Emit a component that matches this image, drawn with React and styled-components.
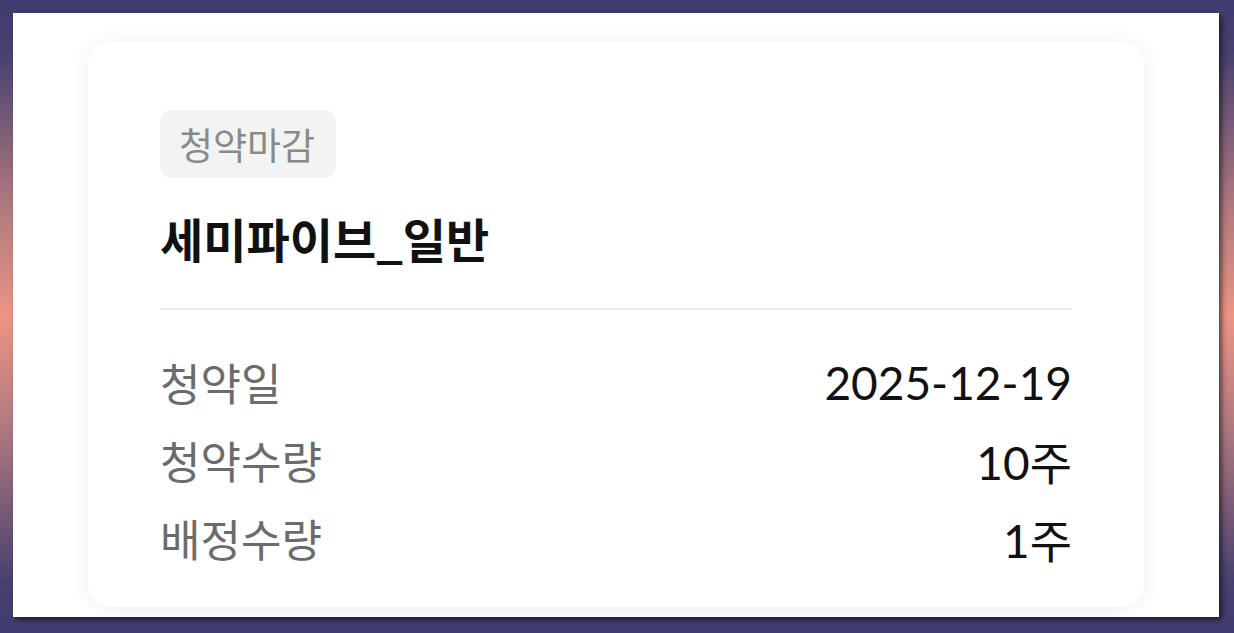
import React from "react";
import styled, { createGlobalStyle } from "styled-components";

const GlobalStyle = createGlobalStyle`
  html, body {
    margin: 0;
    padding: 0;
  }
  body {
    width: 1234px;
    height: 633px;
    overflow: hidden;
    background: linear-gradient(
      to bottom,
      #3f3c70 0%,
      #47406f 8%,
      #b27a80 33%,
      #ec9484 50%,
      #b27a80 67%,
      #47406f 92%,
      #3f3c70 100%
    );
    font-family: Lato, "Noto Sans CJK KR", sans-serif;
  }
`;

const Frame = styled.div`
  box-sizing: border-box;
  margin: 13px 15px 0 13px;
  width: 1206px;
  height: 604px;
  background: #ffffff;
  box-shadow: 3px 3px 5px rgba(0, 0, 0, 0.55);
  padding: 29px 75px 0;
`;

const Card = styled.section`
  box-sizing: border-box;
  height: 565px;
  background: #ffffff;
  border-radius: 24px;
  box-shadow: 0 2px 22px rgba(0, 0, 0, 0.07);
  padding: 68px 72px 0;
  display: flex;
  flex-direction: column;
`;

const Badge = styled.span`
  align-self: flex-start;
  box-sizing: border-box;
  height: 68px;
  display: inline-flex;
  align-items: center;
  padding: 0 21px 0 19px;
  border-radius: 12px;
  background: #f3f3f3;
  color: #8a8a8a;
  font-size: 37px;
  font-family: "Noto Sans CJK KR", sans-serif;
`;

const Title = styled.h2`
  margin: 29px 0 0;
  font-family: "Noto Sans CJK KR", sans-serif;
  font-size: 47px;
  line-height: 62px;
  font-weight: 700;
  color: #111111;
`;

const Divider = styled.hr`
  margin: 39px 0 33px;
  border: none;
  height: 2px;
  background: #ebebeb;
`;

const InfoList = styled.dl`
  margin: 0;
  display: flex;
  flex-direction: column;
`;

const InfoRow = styled.div`
  height: 78px;
  display: flex;
  align-items: center;
  justify-content: space-between;
`;

const Label = styled.dt`
  margin: 0;
  font-family: "Noto Sans CJK KR", sans-serif;
  font-size: 44px;
  color: #6b6b6b;
`;

const Value = styled.dd`
  margin: 0;
  font-family: Lato, "Noto Sans CJK KR", sans-serif;
  font-size: 46px;
  color: #111111;
`;

const rows = [
  { label: "청약일", value: "2025-12-19" },
  { label: "청약수량", value: "10주" },
  { label: "배정수량", value: "1주" },
];

export default function App() {
  return (
    <>
      <GlobalStyle />
      <Frame>
        <Card>
          <Badge>청약마감</Badge>
          <Title>세미파이브_일반</Title>
          <Divider />
          <InfoList>
            {rows.map((r) => (
              <InfoRow key={r.label}>
                <Label>{r.label}</Label>
                <Value>{r.value}</Value>
              </InfoRow>
            ))}
          </InfoList>
        </Card>
      </Frame>
    </>
  );
}
